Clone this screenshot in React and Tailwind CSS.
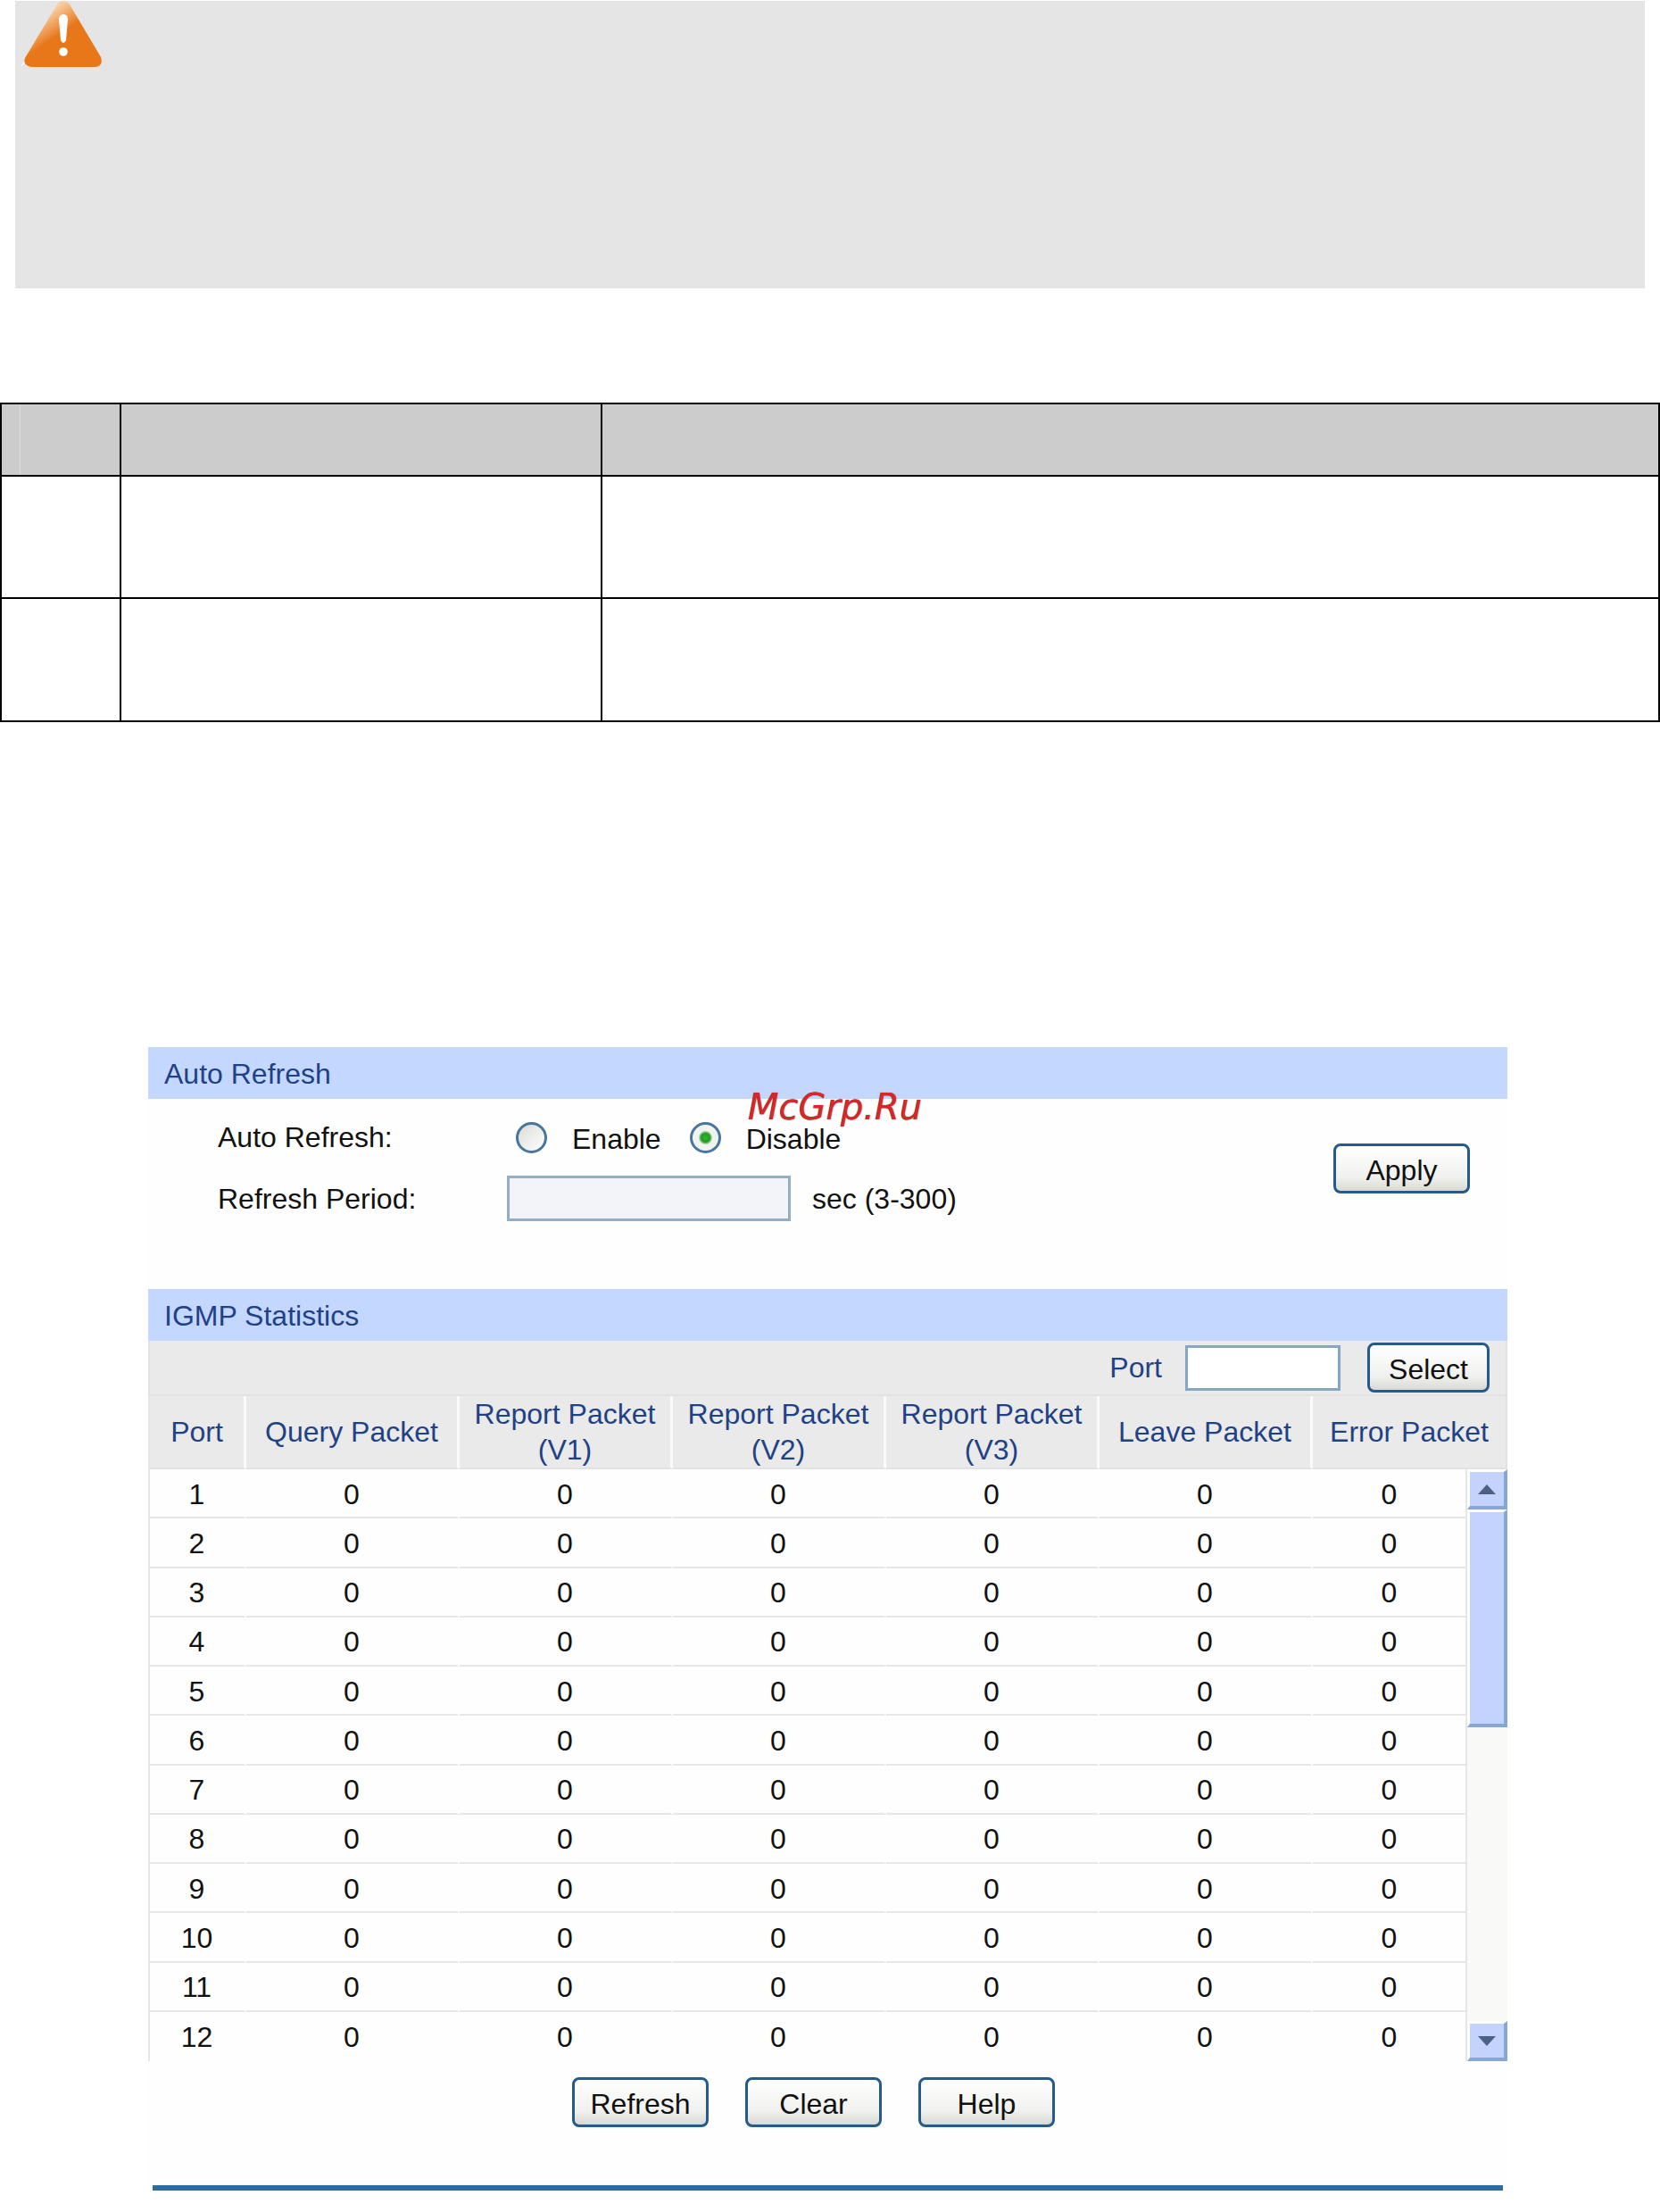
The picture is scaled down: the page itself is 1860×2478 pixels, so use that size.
import React, { useState } from "react";

const columns = [
  "Port",
  "Query Packet",
  "Report Packet (V1)",
  "Report Packet (V2)",
  "Report Packet (V3)",
  "Leave Packet",
  "Error Packet",
];

const rows = Array.from({ length: 12 }, (_, i) => ({
  port: i + 1,
  counts: [0, 0, 0, 0, 0, 0],
}));

const WarningIcon = () => (
  <svg width="92" height="75" viewBox="0 0 92 75" aria-hidden="true">
    <defs>
      <linearGradient
        id="gloss"
        gradientUnits="userSpaceOnUse"
        x1="17"
        y1="23"
        x2="32"
        y2="45"
      >
        <stop offset="0" stopColor="#f8cda3" />
        <stop offset="0.9" stopColor="#e98229" />
        <stop offset="1" stopColor="#e8771a" />
      </linearGradient>
    </defs>
    <path d="M0 74 L5 66 V70 Z" fill="#fff" />
    <path
      d="M41 4 Q48 -4 55 4 L90 63 Q93 73 84 74 L12 74 Q2 72 5 64 Z"
      fill="url(#gloss)"
    />
    <path
      d="M43 21 Q43 15 48 15 Q53 15 53 21 L51 44 Q50 47 48 47 Q46 47 45 44 Z"
      fill="#fff"
    />
    <circle cx="48" cy="57" r="4.8" fill="#fff" />
  </svg>
);

const Button = ({ children, className = "w-[153px]", ...props }) => (
  <button
    type="button"
    className={`${className} h-14 pt-1 flex items-center justify-center rounded-lg border-[3px] border-[#245a8c] bg-linear-to-b from-white via-[#f0f0ee] via-70% to-[#d9d9d4]`}
    {...props}
  >
    {children}
  </button>
);

const SectionTitle = ({ children }) => (
  <h2 className="h-[58px] pt-0.5 pl-[18px] flex items-center bg-[#c4d8ff] text-[#1f4287]">
    {children}
  </h2>
);

const Radio = ({ label, ...props }) => (
  <label className="flex items-center gap-7">
    <input
      type="radio"
      name="autoRefresh"
      className="appearance-none size-[35px] rounded-full border-[3px] border-[#47769f]
                 bg-linear-to-br from-[#dcdcd6] to-white
                 checked:bg-[radial-gradient(circle,#2db82d_0px,#239c23_5px,#f1f3ee_8px)]"
      {...props}
    />
    <span className="pt-1">{label}</span>
  </label>
);

const ScrollBar = () => (
  <div className="h-[663px] flex flex-col bg-[#f9f9f7]">
    <button
      type="button"
      aria-label="Scroll up"
      className="h-[45px] shrink-0 flex items-center justify-center border-t-[3px] border-l-[3px] border-r-4 border-b-4 border-t-white border-l-white border-r-[#86a6d6] border-b-[#86a6d6] bg-[#c3d3fd]"
    >
      <svg width="20" height="11" viewBox="0 0 20 11">
        <path d="M10 0 L20 11 H0 Z" fill="#4d6185" />
      </svg>
    </button>
    <div className="h-[244px] border-t-[3px] border-l-[3px] border-r-4 border-b-4 border-t-white border-l-white border-r-[#86a6d6] border-b-[#86a6d6] bg-[#c3d3fd]" />
    <button
      type="button"
      aria-label="Scroll down"
      className="h-[45px] mt-auto shrink-0 flex items-center justify-center border-t-[3px] border-l-[3px] border-r-4 border-b-4 border-t-white border-l-white border-r-[#86a6d6] border-b-[#86a6d6] bg-[#c3d3fd]"
    >
      <svg width="20" height="11" viewBox="0 0 20 11">
        <path d="M0 0 H20 L10 11 Z" fill="#4d6185" />
      </svg>
    </button>
  </div>
);

// Blank three-column table above the form
const StepsTable = () => (
  <table className="mt-32 w-full table-fixed border-collapse">
    <colgroup>
      <col className="w-[134px]" />
      <col className="w-[539px]" />
      <col />
    </colgroup>
    <thead>
      <tr className="h-[81px] bg-[#ccc]">
        <th className="p-0 border-2 border-black">
          <div className="ml-5 h-[79px] border-l border-[#dedede]" />
        </th>
        <th className="border-2 border-black" />
        <th className="border-2 border-black" />
      </tr>
    </thead>
    <tbody>
      <tr className="h-[137px]">
        <td className="border-2 border-black" />
        <td className="border-2 border-black" />
        <td className="border-2 border-black" />
      </tr>
      <tr className="h-[138px]">
        <td className="border-2 border-black" />
        <td className="border-2 border-black" />
        <td className="border-2 border-black" />
      </tr>
    </tbody>
  </table>
);

const AutoRefresh = () => {
  const [mode, setMode] = useState("disable");

  return (
    <section className="relative">
      <SectionTitle>Auto Refresh</SectionTitle>
      <form className="h-[213px] pl-[78px] pr-[42px] flex justify-between items-start">
        <div className="pt-4 flex flex-col gap-4">
          <div className="h-[54px] flex items-center">
            <span className="w-[334px]">Auto Refresh:</span>
            <div className="flex gap-8">
              <Radio
                label="Enable"
                value="enable"
                checked={mode === "enable"}
                onChange={() => setMode("enable")}
              />
              <Radio
                label="Disable"
                value="disable"
                checked={mode === "disable"}
                onChange={() => setMode("disable")}
              />
            </div>
          </div>
          <div className="flex items-center">
            <label htmlFor="period" className="w-[324px]">
              Refresh Period:
            </label>
            <input
              id="period"
              type="text"
              disabled={mode === "disable"}
              className="w-[318px] h-[51px] mr-6 px-2 border-[3px] border-[#95aec8] bg-[#f3f4fa]"
            />
            sec (3-300)
          </div>
        </div>
        <div className="pt-[50px]">
          <Button>Apply</Button>
        </div>
      </form>
      <span className="absolute left-[672px] top-[47px] font-['DejaVu_Sans'] italic text-[40px] leading-10 text-[#dc2626] [text-shadow:0_0_1px_#333]">
        McGrp.Ru
      </span>
    </section>
  );
};

const IgmpStatistics = () => (
  <section>
    <SectionTitle>IGMP Statistics</SectionTitle>
    <div className="h-[62px] pr-[18px] flex items-center justify-end border-b-2 border-x-2 border-[#e2e2e2] bg-[#eaeaea]">
      <label htmlFor="port" className="mr-[26px] text-[#1f4287]">
        Port
      </label>
      <input
        id="port"
        type="text"
        className="w-[174px] h-[51px] mr-[30px] px-2 border-[3px] border-[#86a6c5] bg-white"
      />
      <Button className="w-[137px]">Select</Button>
    </div>
    <table className="w-full table-fixed border-separate border-spacing-0 border-l-2 border-[#e6e6e6] text-center">
      <colgroup>
        <col className="w-[108px]" />
        <col />
        <col />
        <col />
        <col />
        <col />
        <col className="w-[173px]" />
        <col className="w-[45px]" />
      </colgroup>
      <thead>
        <tr className="h-[82px] bg-[#eaeaea] text-[#1f4287]">
          {columns.map((name) => (
            <th
              key={name}
              colSpan={name === "Error Packet" ? 2 : 1}
              className="p-0 font-normal border-b-2 border-r-[3px] border-b-[#e2e2e2] border-r-[#fafafa] last:border-r-2 last:border-r-[#e2e2e2]"
            >
              {name}
            </th>
          ))}
        </tr>
      </thead>
      <tbody className="[&>tr:last-child>td]:border-b-0">
        {rows.map((row, index) => (
          <tr key={row.port} className="h-[55px]">
            <td className="p-0 pt-0.5 border-b-2 border-r-[3px] border-b-[#e6e6e6] border-r-[#fefefe]">
              {row.port}
            </td>
            {row.counts.map((count, i) => (
              <td
                key={i}
                className={
                  i === 5
                    ? "p-0 pt-0.5 border-b-2 border-r-2 border-[#e6e6e6]"
                    : "p-0 pt-0.5 border-b-2 border-r-[3px] border-b-[#e6e6e6] border-r-[#fefefe]"
                }
              >
                {count}
              </td>
            ))}
            {index === 0 && (
              <td rowSpan={rows.length} className="p-0">
                <ScrollBar />
              </td>
            )}
          </tr>
        ))}
      </tbody>
    </table>
    <div className="mt-[18px] pr-8 flex justify-center gap-[41px]">
      <Button>Refresh</Button>
      <Button>Clear</Button>
      <Button>Help</Button>
    </div>
  </section>
);

const App = () => {
  return (
    <div className="bg-white pt-px pb-6 font-['Liberation_Sans',Arial,sans-serif] text-[32px] leading-10 text-[#111]">
      <div className="mx-[17px] h-[322px] pl-1.5 bg-[#e5e5e5]">
        <WarningIcon />
      </div>
      <StepsTable />
      <main className="mt-[364px] ml-[166px] mr-[171px] bg-[#fefefe]">
        <AutoRefresh />
        <IgmpStatistics />
        <hr className="mt-[65px] mx-[5px] border-t-[6px] border-[#2d6c9b]" />
      </main>
    </div>
  );
};

export default App;
